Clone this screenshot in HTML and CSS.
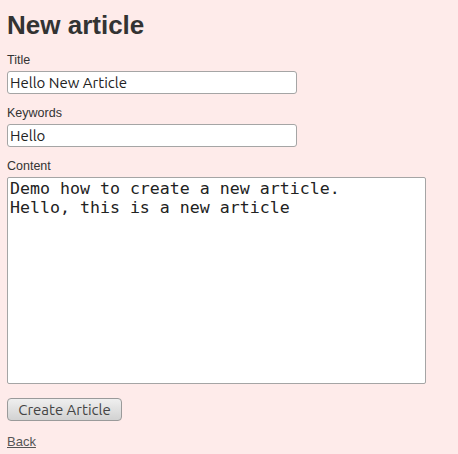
FILE: index.html
```html
<!DOCTYPE html>
<html>
<head>
<meta charset="utf-8">
<title>New article</title>
<link rel="stylesheet" href="styles.css">
</head>
<body>
<h1 class="page-title">New article</h1>
<form class="article-form">
  <div class="field">
    <label class="field-label" for="title">Title</label>
    <input class="text-input" id="title" type="text" value="Hello New Article">
  </div>
  <div class="field">
    <label class="field-label" for="keywords">Keywords</label>
    <input class="text-input" id="keywords" type="text" value="Hello">
  </div>
  <div class="field">
    <label class="field-label" for="content">Content</label>
    <textarea class="text-area" id="content">Demo how to create a new article.
Hello, this is a new article</textarea>
  </div>
  <div class="actions">
    <button class="submit-btn" type="button">Create Article</button>
  </div>
</form>
<a class="back-link" href="#">Back</a>
</body>
</html>
```

FILE: styles.css
```css
html, body {
  margin: 0;
  padding: 0;
}
body {
  background: #feebea;
  color: #333;
  font-family: "Liberation Sans", Arial, sans-serif;
  padding: 10px 7px 0 7px;
  display: flex;
  flex-direction: column;
  align-items: flex-start;
}
.page-title {
  margin: 0;
  font-size: 26px;
  font-weight: bold;
  line-height: 30px;
  color: #333;
}
.article-form {
  display: flex;
  flex-direction: column;
  margin-top: 13px;
}
.field {
  display: flex;
  flex-direction: column;
  align-items: flex-start;
  margin-bottom: 12px;
}
.field-label {
  font-size: 12.5px;
  line-height: 15px;
  color: #333;
  margin-bottom: 3px;
}
.text-input {
  box-sizing: border-box;
  width: 290px;
  height: 23px;
  margin: 0;
  padding: 0 2px;
  border: 1px solid #a5a5a5;
  border-radius: 3px;
  background: #fff;
  font-family: Ubuntu, Lato, "Open Sans", sans-serif;
  font-size: 15px;
  color: #222;
}
.text-area {
  box-sizing: border-box;
  width: 419px;
  height: 207px;
  margin: 0;
  padding: 1px 2px;
  border: 1px solid #a5a5a5;
  border-radius: 2px;
  background: #fff;
  font-family: "DejaVu Sans Mono", monospace;
  font-size: 16.6px;
  line-height: 19.4px;
  color: #222;
  resize: none;
}
.actions {
  margin-top: 2px;
}
.submit-btn {
  box-sizing: border-box;
  width: 115px;
  height: 23px;
  margin: 0;
  padding: 0;
  border: 1px solid #9a9a9a;
  border-radius: 4px;
  background: linear-gradient(#efefef, #d2d2d2);
  font-family: Ubuntu, Lato, "Open Sans", sans-serif;
  font-size: 15px;
  color: #444;
}
.back-link {
  margin-top: 13px;
  font-size: 13px;
  line-height: 15px;
  color: #555;
  text-decoration: underline;
}
```
